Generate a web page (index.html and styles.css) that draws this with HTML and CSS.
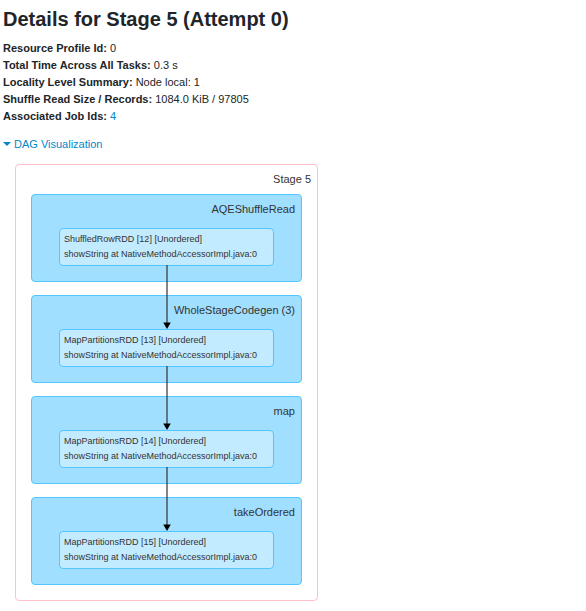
FILE: index.html
```
<!DOCTYPE html>
<html lang="en">
<head>
<meta charset="utf-8">
<title>Details for Stage 5 (Attempt 0)</title>
<link rel="stylesheet" href="styles.css">
</head>
<body>
<main>
  <h1>Details for Stage 5 (Attempt 0)</h1>
  <ul class="summary">
    <li><strong>Resource Profile Id:</strong> 0</li>
    <li><strong>Total Time Across All Tasks:</strong> 0.3 s</li>
    <li><strong>Locality Level Summary:</strong> Node local: 1</li>
    <li><strong>Shuffle Read Size / Records:</strong> 1084.0 KiB / 97805</li>
    <li><strong>Associated Job Ids:</strong> <a href="#job-4">4</a></li>
  </ul>
  <a class="toggle" href="#dag"><span class="caret"></span>DAG Visualization</a>
  <section class="stage" id="dag">
    <h2 class="label">Stage 5</h2>
    <div class="clusters">
      <div class="cluster">
        <h3 class="label">AQEShuffleRead</h3>
        <div class="node">
          <p>ShuffledRowRDD [12] [Unordered]</p>
          <p>showString at NativeMethodAccessorImpl.java:0</p>
          <svg class="edge" width="10" height="64" viewBox="0 0 10 64" aria-hidden="true"><path d="M5 0V58" stroke="#333" stroke-width="1.2"/><path d="M1.2 57.5H8.8L5 64Z"/></svg>
        </div>
      </div>
      <div class="cluster">
        <h3 class="label">WholeStageCodegen (3)</h3>
        <div class="node">
          <p>MapPartitionsRDD [13] [Unordered]</p>
          <p>showString at NativeMethodAccessorImpl.java:0</p>
          <svg class="edge" width="10" height="64" viewBox="0 0 10 64" aria-hidden="true"><path d="M5 0V58" stroke="#333" stroke-width="1.2"/><path d="M1.2 57.5H8.8L5 64Z"/></svg>
        </div>
      </div>
      <div class="cluster">
        <h3 class="label">map</h3>
        <div class="node">
          <p>MapPartitionsRDD [14] [Unordered]</p>
          <p>showString at NativeMethodAccessorImpl.java:0</p>
          <svg class="edge" width="10" height="64" viewBox="0 0 10 64" aria-hidden="true"><path d="M5 0V58" stroke="#333" stroke-width="1.2"/><path d="M1.2 57.5H8.8L5 64Z"/></svg>
        </div>
      </div>
      <div class="cluster">
        <h3 class="label">takeOrdered</h3>
        <div class="node">
          <p>MapPartitionsRDD [15] [Unordered]</p>
          <p>showString at NativeMethodAccessorImpl.java:0</p>
        </div>
      </div>
    </div>
  </section>
</main>
</body>
</html>
```
FILE: styles.css
```
* {
  box-sizing: border-box;
}

body {
  margin: 0;
  padding: 7px 3px 10px;
  background: #fff;
  color: #212529;
  font: 11px/17px "Liberation Sans", Arial, sans-serif;
}

h1,
h2,
h3,
p {
  margin: 0;
}

h1 {
  font-size: 20px;
  line-height: 24px;
}

a {
  color: #0088cc;
  text-decoration: none;
}

.summary {
  margin: 9px 0 11px;
  padding: 0;
  list-style: none;
}

.toggle {
  display: flex;
  align-items: center;
  gap: 3px;
}

.caret {
  margin-bottom: 2px;
  border: 4px solid transparent;
  border-top-color: currentColor;
  border-bottom: 0;
}

.stage {
  width: fit-content;
  margin: 11px 0 0 12px;
  padding: 6px 15px 15px;
  border: 1px solid #ffc0cb;
  border-radius: 4px;
}

.label {
  color: #333;
  font-size: 11px;
  font-weight: 400;
  line-height: 16px;
  text-align: right;
}

.stage > .label {
  margin: 0 -9px 7px 0;
}

.clusters {
  display: grid;
  gap: 13px;
}

.cluster {
  padding: 6px 27px 15px;
  border: 1px solid #52c6ff;
  border-radius: 4px;
  background: #a0dfff;
}

.cluster > .label {
  margin: 0 -21px 11px 0;
}

.node {
  position: relative;
  width: 215px;
  padding: 3px 4px;
  border: 1px solid #52c6ff;
  border-radius: 4px;
  background: #c3ebff;
  color: #333;
  font-size: 9px;
  line-height: 15px;
}

.node p {
  white-space: nowrap;
}

.edge {
  position: absolute;
  top: 100%;
  left: 50%;
  z-index: 1;
  margin-left: -5px;
}
```
